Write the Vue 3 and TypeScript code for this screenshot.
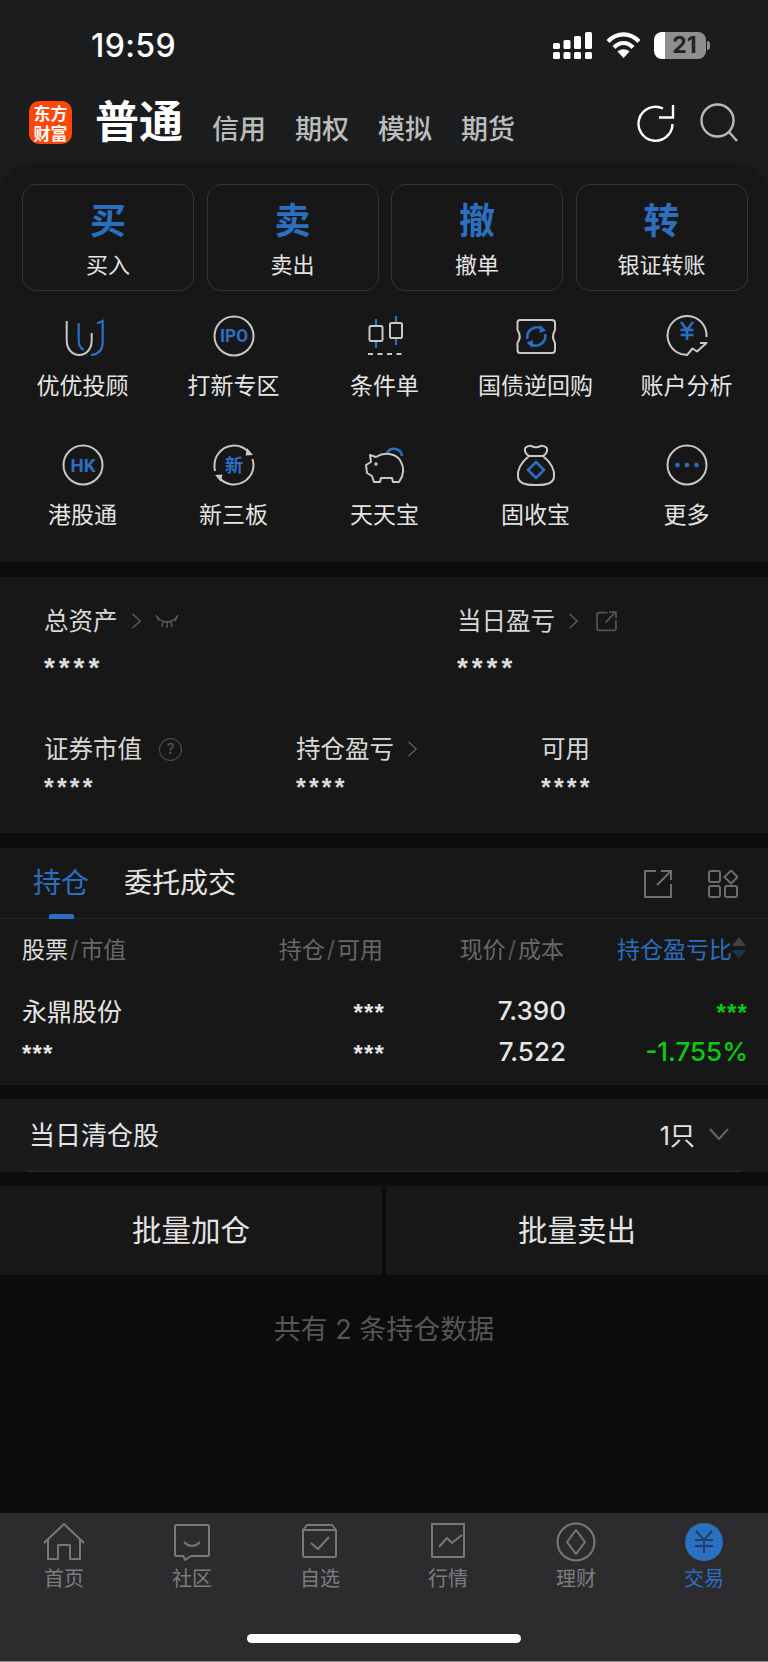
<template>
  <div class="page">
    <div class="top">
      <div class="status">
        <span class="time">19:59</span>
        <div class="status-icons">
          <svg width="40" height="27" viewBox="0 0 40 27" fill="#fff">
            <rect x="0" y="11" width="7" height="6" rx="1.5" />
            <rect x="10.5" y="8" width="7" height="9" rx="1.5" />
            <rect x="21" y="4" width="7" height="13" rx="1.5" />
            <rect x="32" y="0" width="7" height="17" rx="1.5" />
            <rect x="0" y="20" width="7" height="7" rx="1.5" />
            <rect x="10.5" y="20" width="7" height="7" rx="1.5" />
            <rect x="21" y="20" width="7" height="7" rx="1.5" />
            <rect x="32" y="20" width="7" height="7" rx="1.5" />
          </svg>
          <svg width="35" height="26" viewBox="0 0 35 26" fill="none" stroke="#fff" stroke-width="4.2">
            <path d="M2 9.5 C11 0 24 0 33 9.5" />
            <path d="M8 15.5 C13.5 9.5 21.5 9.5 27 15.5" />
            <path d="M17.5 26 L11.5 19.5 C15 16.5 20 16.5 23.5 19.5 Z" fill="#fff" stroke="none" />
          </svg>
          <div class="battery">
            <div class="battery-body"><span>21</span></div>
            <div class="battery-nub"></div>
          </div>
        </div>
      </div>

      <div class="nav">
        <div class="logo"><span>东方</span><span>财富</span></div>
        <span class="nav-title">普通</span>
        <div class="nav-tabs">
          <span v-for="tab in navTabs" :key="tab">{{ tab }}</span>
        </div>
        <div class="nav-icons">
          <svg width="38" height="40" viewBox="0 0 38 40" fill="none" stroke="#fff" stroke-width="2.4">
            <path d="M35.5 21 A17 17 0 1 1 26 5.5" />
            <path d="M36 2 V14.5 H22" />
          </svg>
          <svg width="40" height="40" viewBox="0 0 40 40" fill="none" stroke="#b9b9b9" stroke-width="2.4">
            <circle cx="18.5" cy="17.5" r="16" />
            <path d="M30 29 L38 38" />
          </svg>
        </div>
      </div>

      <div class="card">
        <div class="trade-btns">
          <div v-for="btn in tradeBtns" :key="btn.label" class="trade-btn">
            <span class="trade-big">{{ btn.big }}</span>
            <span class="trade-label">{{ btn.label }}</span>
          </div>
        </div>

        <div class="quick">
          <div class="quick-item">
            <svg class="qi" viewBox="0 0 42 42">
              <path class="g" d="M4.7 6 V25 C4.7 45 29.7 45 29.7 25 V18" />
              <path class="b" d="M16.7 8 V26 Q16.7 32 21.7 35" />
              <path class="b" d="M35 8.5 L40.7 6 V27 Q40.7 39 29 40" />
            </svg>
            <span>优优投顾</span>
          </div>
          <div class="quick-item">
            <svg class="qi" viewBox="0 0 42 42">
              <circle class="g" cx="21" cy="21" r="19.5" />
              <text class="qi-text" x="21" y="27" font-size="18" textLength="28" lengthAdjust="spacingAndGlyphs">IPO</text>
            </svg>
            <span>打新专区</span>
          </div>
          <div class="quick-item">
            <svg class="qi" viewBox="0 0 42 42">
              <path class="b" d="M12 4 V11 M12 26 V33 M32 1 V8 M32 23 V30" />
              <rect class="g" x="5.5" y="11" width="13" height="15" rx="1.5" />
              <rect class="g" x="26" y="8" width="12" height="15" rx="1.5" />
              <path class="g" d="M4 39 H41" stroke-dasharray="5 4.5" />
            </svg>
            <span>条件单</span>
          </div>
          <div class="quick-item">
            <svg class="qi" viewBox="0 0 42 42">
              <path class="g" d="M5 5 H37 Q40 5 40 8 V15 Q36 21.5 40 28 V35 Q40 38 37 38 H5 Q2.500 38 2.500 35 V28 Q7 21.500 2.500 15 V8 Q2.500 5 5 5 Z" />
              <path class="b wide" d="M12.500 24 A9.500 9.500 0 0 1 27 14 M30 19 A9.500 9.500 0 0 1 15.500 29" />
              <path class="bf" d="M25 10 L31 15.500 L24.500 18 Z M17.500 33 L11.500 27.500 L18 25 Z" />
            </svg>
            <span>国债逆回购</span>
          </div>
          <div class="quick-item">
            <svg class="qi" viewBox="0 0 42 42">
              <path class="g" d="M40.500 22 A19.500 19.500 0 1 0 15 39 L21 40 L26.500 33.500 L31 36.500 L40.500 28 H34" />
              <path class="b wide" d="M15 7 L21 15 L27 7 M21 15 V25 M14.500 15 H27.500 M14.500 20 H27.500" />
            </svg>
            <span>账户分析</span>
          </div>
          <div class="quick-item">
            <svg class="qi" viewBox="0 0 42 42">
              <circle class="g" cx="21" cy="21" r="19.500" />
              <text class="qi-text" x="21" y="27.500" font-size="18" textLength="25" lengthAdjust="spacingAndGlyphs">HK</text>
            </svg>
            <span>港股通</span>
          </div>
          <div class="quick-item">
            <svg class="qi" viewBox="0 0 42 42">
              <path class="g" d="M5 10 A19.500 19.500 0 0 1 35 7.500 M39.500 15 A19.500 19.500 0 0 1 40.500 21 A19.500 19.500 0 0 1 6.500 34 M2 27 A19.500 19.500 0 0 1 1.500 21 A19.500 19.500 0 0 1 5 10" />
              <path class="gf" d="M34 4 L40 11 L32.500 11.500 Z M8 38 L2 31 L9.500 30.500 Z" />
              <text class="qi-cjk" x="21" y="28" font-size="18">新</text>
            </svg>
            <span>新三板</span>
          </div>
          <div class="quick-item">
            <svg class="qi" viewBox="0 0 42 42">
              <path class="b wide" d="M23 9 A8 8 0 0 1 38 12" />
              <path class="g" d="M6 11 L12 13 C20 8 31 9 36 16 C41 24 40 31 35 38 H29 L28 34 H17 L16 38 H10 L8 32 L3 29 L2 21 L7 18 Z" />
              <circle class="gf" cx="12" cy="20" r="1.700" />
            </svg>
            <span>天天宝</span>
          </div>
          <div class="quick-item">
            <svg class="qi" viewBox="0 0 42 42">
              <path class="g" d="M14 12 C9 9 8 3 14 2 C17 1 18 4 21 3 C24 4 25 1 28 2 C34 3 33 9 28 12 C34 17 40 25 39 33 C38 39 33 41 21 41 C9 41 4 39 3 33 C2 25 8 17 14 12 Z" />
              <path class="g" d="M14 12 H28" />
              <path class="b wide" d="M21 18 L29 26 L21 34 L13 26 Z" />
            </svg>
            <span>固收宝</span>
          </div>
          <div class="quick-item">
            <svg class="qi" viewBox="0 0 42 42">
              <circle class="g" cx="21" cy="21" r="19.500" />
              <circle class="bf" cx="11.500" cy="21" r="2.300" />
              <circle class="bf" cx="21" cy="21" r="2.300" />
              <circle class="bf" cx="30.500" cy="21" r="2.300" />
            </svg>
            <span>更多</span>
          </div>
        </div>
      </div>
    </div>

    <section class="assets">
      <div class="asset-row asset-row-1">
        <div class="asset asset-total">
          <div class="asset-label">
            总资产
            <svg class="chev" viewBox="0 0 12 20"><path d="M1.500 2 L10 10 L1.500 18" /></svg>
            <svg class="eye" viewBox="0 0 24 16"><path d="M1 2 C6 11 18 11 23 2 M1 2 L4 8 M23 2 L20 8 M8 8 L7 14 M12 9 V15 M16 8 L17 14" /></svg>
          </div>
          <div class="stars stars-lg">****</div>
        </div>
        <div class="asset">
          <div class="asset-label">
            当日盈亏
            <svg class="chev" viewBox="0 0 12 20"><path d="M1.500 2 L10 10 L1.500 18" /></svg>
            <svg class="share" viewBox="0 0 20 20"><path d="M11 1.500 H3 Q1 1.500 1 3.500 V16.500 Q1 18.500 3 18.500 H17 Q19 18.500 19 16.500 V9 M9 11 L18 1.500 M12.500 1 H19 V7" /></svg>
          </div>
          <div class="stars stars-lg">****</div>
        </div>
      </div>
      <div class="asset-row asset-row-2">
        <div class="asset asset-a">
          <div class="asset-label">
            证券市值
            <span class="help">?</span>
          </div>
          <div class="stars">****</div>
        </div>
        <div class="asset asset-b">
          <div class="asset-label">
            持仓盈亏
            <svg class="chev" viewBox="0 0 12 20"><path d="M1.500 2 L10 10 L1.500 18" /></svg>
          </div>
          <div class="stars">****</div>
        </div>
        <div class="asset">
          <div class="asset-label">可用</div>
          <div class="stars">****</div>
        </div>
      </div>
    </section>

    <section class="positions">
      <div class="pos-tabs">
        <span class="pos-tab active">持仓</span>
        <span class="pos-tab">委托成交</span>
        <div class="pos-icons">
          <svg width="28" height="28" viewBox="0 0 28 28" fill="none" stroke="#6d6d6d" stroke-width="2">
            <path d="M12 1 H1 V27 H27 V14 M13 15 L26 2 M17 1 H27 V10" />
          </svg>
          <svg width="30" height="28" viewBox="0 0 30 28" fill="none" stroke="#6d6d6d" stroke-width="2">
            <rect x="1" y="1" width="11" height="11" rx="2" />
            <rect x="1" y="16" width="11" height="11" rx="2" />
            <rect x="17" y="16" width="12" height="11" rx="2" />
            <path d="M23 0.500 L29.500 7 L23 13.500 L16.500 7 Z" />
          </svg>
        </div>
      </div>
      <div class="table table-head">
        <div class="th"><span class="th-main">股票</span><i>/</i>市值</div>
        <div class="th right">持仓<i>/</i>可用</div>
        <div class="th right">现价<i>/</i>成本</div>
        <div class="th right sort">
          持仓盈亏比
          <svg class="sort-arrows" width="14" height="22" viewBox="0 0 14 22">
            <path d="M7 0 L14 9 H0 Z" fill="#404040" />
            <path d="M7 22 L14 13 H0 Z" fill="#1a3350" />
          </svg>
        </div>
      </div>
      <div class="table table-body">
        <div class="td name">永鼎股份</div>
        <div class="td right mask">***</div>
        <div class="td right num">7.390</div>
        <div class="td right mask up">***</div>

        <div class="td mask">***</div>
        <div class="td right mask">***</div>
        <div class="td right num">7.522</div>
        <div class="td right num up">-1.755%</div>
      </div>
    </section>

    <section class="cleared">
      <span>当日清仓股</span>
      <div class="cleared-right">
        1只
        <svg width="20" height="12" viewBox="0 0 20 12" fill="none" stroke="#666" stroke-width="2"><path d="M1 1 L10 11 L19 1" /></svg>
      </div>
    </section>

    <div class="batch">
      <div class="batch-btn">批量加仓</div>
      <div class="batch-btn">批量卖出</div>
    </div>

    <div class="count">共有 2 条持仓数据</div>

    <nav class="tabbar">
      <div class="tab-items">
        <div class="tab">
          <svg class="ti" viewBox="0 0 48 40"><path d="M4 21 L24 2 L44 21 M8 17 V37 H18 V23 H30 V37 H40 V17" /></svg>
          <span>首页</span>
        </div>
        <div class="tab">
          <svg class="ti" viewBox="0 0 48 40"><path d="M8.500 3 H39.500 Q41 3 41 4.500 V32.500 Q41 34 39.500 34 H23 L17 38 L15.500 34 H8.500 Q7 34 7 32.500 V4.500 Q7 3 8.500 3 Z M16 20 Q24 28 32 20" /></svg>
          <span>社区</span>
        </div>
        <div class="tab">
          <svg class="ti" viewBox="0 0 48 40"><path d="M7 8 L11 3 H36 L40 8 V33 Q40 35 38 35 H9 Q7 35 7 33 Z M7 8 H40 M15 21 L22 27 L33 15" /></svg>
          <span>自选</span>
        </div>
        <div class="tab">
          <svg class="ti" viewBox="0 0 48 40"><path d="M8 2 H40 V35 H8 Z M15 25 L23 16 L28 21 L38 13" /></svg>
          <span>行情</span>
        </div>
        <div class="tab">
          <svg class="ti" viewBox="0 0 48 40"><circle cx="24" cy="20" r="18.500" /><path d="M24 8 L33 20 L24 32 L15 20 Z" /></svg>
          <span>理财</span>
        </div>
        <div class="tab active">
          <svg class="ti trade" viewBox="0 0 48 40">
            <circle class="trade-disc" cx="24" cy="20" r="19" />
            <path d="M16 9 L24 18 L32 9 M24 18 V31 M15 18 H33 M15 24 H33" />
          </svg>
          <span>交易</span>
        </div>
      </div>
      <div class="home-bar"></div>
    </nav>
  </div>
</template>

<script setup lang="ts">
interface TradeBtn {
  big: string;
  label: string;
}

const navTabs: string[] = ['信用', '期权', '模拟', '期货'];

const tradeBtns: TradeBtn[] = [
  { big: '买', label: '买入' },
  { big: '卖', label: '卖出' },
  { big: '撤', label: '撤单' },
  { big: '转', label: '银证转账' },
];
</script>

<style>
body {
  background-color: #0c0c0c;
}
</style>

<style scoped>
.page,
.page * {
  box-sizing: border-box;
}

.page {
  width: 768px;
  height: 1662px;
  display: flex;
  flex-direction: column;
  overflow: hidden;
  background: #0c0c0c;
  color: #e4e4e4;
  font-family: "Inter", "Noto Sans CJK SC", sans-serif;
}

/* top */
.top {
  background: #1b1c1e;
}

.status {
  height: 90px;
  display: flex;
  justify-content: space-between;
  padding: 0 58px 0 91px;
}

.time {
  font-size: 32px;
  font-weight: 500;
  line-height: 92px;
  color: #fff;
  letter-spacing: 0.4px;
}

.status-icons {
  display: flex;
  align-items: flex-start;
  gap: 13px;
  padding-top: 32px;
}

.battery {
  display: flex;
  align-items: center;
  gap: 1px;
}

.battery-body {
  width: 52px;
  height: 27px;
  border-radius: 8px;
  background: linear-gradient(90deg, #fff 0 11px, #8f8f8f 11px);
  color: #222;
  font-size: 23px;
  font-weight: 700;
  line-height: 27px;
  text-align: center;
  padding-left: 9px;
}

.battery-nub {
  width: 3px;
  height: 9px;
  border-radius: 0 3px 3px 0;
  background: #8f8f8f;
}

.nav {
  height: 73px;
  display: flex;
  align-items: flex-start;
  padding: 11px 29px 0 29px;
}

.logo {
  width: 43px;
  height: 43px;
  border-radius: 10px;
  background: #ff4606;
  color: #fff;
  font-size: 17px;
  font-weight: 700;
  line-height: 20px;
  display: flex;
  flex-direction: column;
  align-items: center;
  justify-content: center;
  flex: none;
  font-family: "Noto Sans CJK SC", sans-serif;
}

.nav-title {
  margin-left: 23px;
  font-size: 44px;
  font-weight: 700;
  line-height: 43px;
  color: #fff;
}

.nav-tabs {
  margin-left: 29px;
  padding-top: 11px;
  display: flex;
  gap: 29px;
  font-size: 27px;
  line-height: 36px;
  font-weight: 500;
  color: #bcbcbc;
}

.nav-icons {
  margin-left: auto;
  display: flex;
  gap: 24px;
  padding-top: 2px;
}

/* trade card */
.card {
  background: #171717;
  border-radius: 30px 30px 0 0;
  padding: 21px 0 32px;
}

.trade-btns {
  display: grid;
  grid-template-columns: repeat(4, 172px);
  gap: 12.5px;
  padding: 0 22px;
}

.trade-btn {
  height: 107px;
  border: 1px solid #333437;
  border-radius: 14px;
  display: flex;
  flex-direction: column;
  align-items: center;
}

.trade-big {
  margin-top: 13px;
  font-size: 36px;
  font-weight: 700;
  line-height: 46px;
  color: #2b6fc1;
}

.trade-label {
  margin-top: 5px;
  font-size: 22px;
  line-height: 32px;
  color: #e4e4e4;
}

.quick {
  display: grid;
  grid-template-columns: repeat(5, 151px);
  row-gap: 43px;
  padding: 24px 0 0 7px;
}

.quick-item {
  height: 86px;
  display: flex;
  flex-direction: column;
  align-items: center;
  font-size: 23px;
  line-height: 30px;
  color: #e4e4e4;
  white-space: nowrap;
}

.qi {
  width: 42px;
  height: 42px;
  margin-bottom: 14px;
  overflow: visible;
  fill: none;
}

.qi .g {
  fill: none;
  stroke: #c8c8c8;
  stroke-width: 2;
  stroke-linejoin: round;
}

.qi .gf {
  fill: #c8c8c8;
}

.qi .b {
  fill: none;
  stroke: #2b6fc1;
  stroke-width: 2.2;
}

.qi .wide {
  stroke-width: 2.6;
}

.qi .bf {
  fill: #2b6fc1;
}

.qi-text {
  fill: #2b6fc1;
  font-weight: 700;
  text-anchor: middle;
  font-family: "Roboto", sans-serif;
}

.qi-cjk {
  fill: #2b6fc1;
  font-weight: 700;
  text-anchor: middle;
  font-family: "Noto Sans CJK SC", sans-serif;
}

/* assets */
.assets {
  margin-top: 15px;
  height: 256px;
  background: #171717;
  padding: 29px 0 0 44px;
}

.asset-row {
  display: flex;
}

.asset-row-1 {
  height: 78px;
}

.asset-row-2 {
  margin-top: 50px;
}

.asset-total {
  width: 413px;
}

.asset-a {
  width: 252px;
}

.asset-b {
  width: 245px;
}

.asset-label {
  display: flex;
  align-items: center;
  font-size: 24.5px;
  line-height: 30px;
  color: #d8d8d8;
  white-space: nowrap;
}

.chev {
  width: 11px;
  height: 18px;
  margin-left: 13px;
  fill: none;
  stroke: #5a5a5a;
  stroke-width: 1.6;
}

.eye {
  width: 24px;
  height: 16px;
  margin-left: 13px;
  fill: none;
  stroke: #5a5a5a;
  stroke-width: 1.4;
}

.share {
  width: 21px;
  height: 21px;
  margin-left: 17px;
  fill: none;
  stroke: #555;
  stroke-width: 1.6;
}

.help {
  width: 23px;
  height: 23px;
  margin-left: 17px;
  border: 1.5px solid #5a5a5a;
  border-radius: 50%;
  color: #5a5a5a;
  font-size: 15px;
  line-height: 20px;
  text-align: center;
}

.stars {
  margin-top: 8px;
  height: 24px;
  font-family: "Liberation Sans", sans-serif;
  font-size: 25px;
  font-weight: 700;
  line-height: 30px;
  letter-spacing: 3.2px;
  color: #dcdcdc;
}

.stars-lg {
  margin-top: 17px;
  font-size: 28px;
  letter-spacing: 3.9px;
}

/* positions */
.positions {
  margin-top: 15px;
  height: 237px;
  background: #171717;
}

.pos-tabs {
  position: relative;
  height: 71px;
  border-bottom: 1px solid #222324;
  display: flex;
  padding: 17px 30px 0 33px;
  gap: 35px;
}

.pos-tab {
  font-size: 28px;
  line-height: 36px;
  color: #e4e4e4;
}

.pos-tab.active {
  color: #2b6fc1;
}

.pos-tab.active::after {
  content: "";
  position: absolute;
  left: 49px;
  top: 66px;
  width: 25px;
  height: 5px;
  border-radius: 2px 2px 0 0;
  background: #2b6fc1;
}

.pos-icons {
  margin-left: auto;
  display: flex;
  gap: 36px;
  padding-top: 5px;
}

.table {
  display: grid;
  grid-template-columns: 221px 140px 181px 182px;
  padding: 0 22px;
  align-items: center;
}

.table-head {
  grid-template-rows: 57px;
}

.table-body {
  margin-top: 13px;
  grid-template-columns: 223px 140px 181px 182px;
  grid-template-rows: 42px 40px;
  padding-right: 20px;
}

.th {
  font-size: 23px;
  color: #676767;
  white-space: nowrap;
}

.th i {
  font-style: normal;
  margin: 0 2px;
  color: #555;
}

.th-main {
  color: #dcdcdc;
}

.right {
  text-align: right;
}

.sort {
  color: #2b6fc1;
  padding-right: 14px;
  position: relative;
}

.sort-arrows {
  position: absolute;
  right: 0;
  top: 50%;
  margin-top: -11px;
}

.td {
  color: #e6e6e6;
  white-space: nowrap;
}

.name {
  font-size: 25px;
}

.num {
  font-size: 26px;
  font-weight: 500;
}

.mask {
  font-family: "Liberation Sans", sans-serif;
  font-size: 24px;
  font-weight: 700;
  line-height: 20px;
  height: 14px;
  letter-spacing: 1.200px;
  align-self: center;
}

.up {
  color: #05cf10;
}

/* cleared */
.cleared {
  margin-top: 14px;
  height: 73px;
  background: #1a1a1d;
  display: flex;
  align-items: center;
  justify-content: space-between;
  padding: 0 39px 4px 29px;
  font-size: 26px;
  color: #e4e4e4;
  position: relative;
}

.cleared::after {
  content: "";
  position: absolute;
  left: 27px;
  right: 27px;
  bottom: 0;
  height: 1px;
  background: #2a2b2d;
}

.cleared-right {
  display: flex;
  align-items: center;
  gap: 14px;
  font-size: 25px;
}

.batch {
  margin-top: 14px;
  height: 89px;
  display: flex;
  gap: 4px;
}

.batch-btn {
  flex: 1;
  background: #171717;
  font-size: 29.5px;
  line-height: 88px;
  text-align: center;
  color: #e4e4e4;
}

.count {
  margin-top: 35px;
  font-size: 27px;
  line-height: 40px;
  text-align: center;
  color: #565656;
}

/* tab bar */
.tabbar {
  margin-top: auto;
  height: 149px;
  background: #2c2c2e;
  border-bottom: 1px solid #8a8a8a;
  padding-top: 9px;
}

.tab-items {
  display: grid;
  grid-template-columns: repeat(6, 128px);
}

.tab {
  display: flex;
  flex-direction: column;
  align-items: center;
  font-size: 20px;
  line-height: 24px;
  color: #7d7d80;
}

.tab.active {
  color: #2b6fc1;
}

.ti {
  width: 48px;
  height: 40px;
  margin-bottom: 5px;
  fill: none;
  stroke: #77787c;
  stroke-width: 2;
  stroke-linejoin: round;
}

.ti.trade {
  stroke: #1e3f69;
}

.trade-disc {
  fill: #2b6fc1;
  stroke: none;
}

.home-bar {
  width: 274px;
  height: 9px;
  margin: 43px 0 0 247px;
  border-radius: 5px;
  background: #fff;
}
</style>
